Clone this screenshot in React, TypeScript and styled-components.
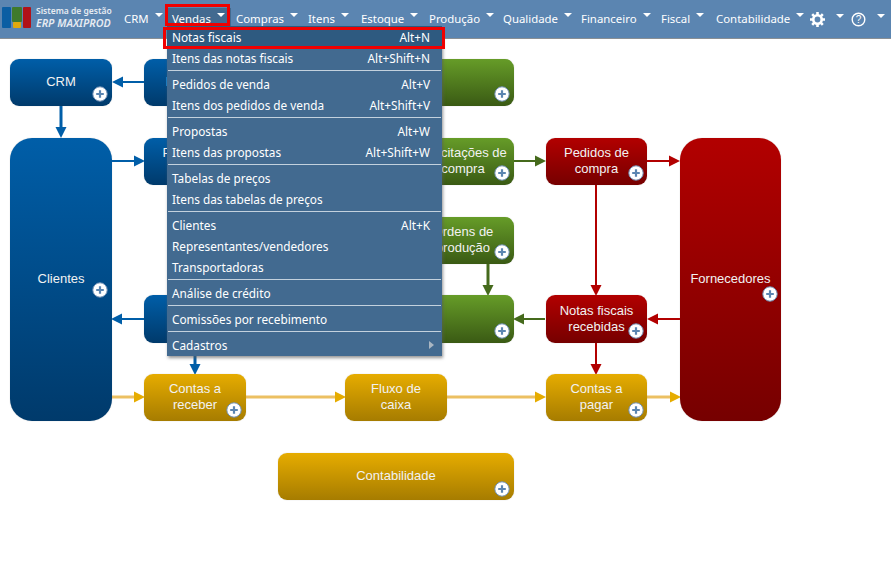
import React from 'react';
import styled, {createGlobalStyle, css} from 'styled-components';

const GlobalStyle = createGlobalStyle`
    html, body {
        margin: 0;
        padding: 0;
        background: #fff;
        overflow: hidden;
    }
`;

const menuFont = `'Noto Sans', 'DejaVu Sans', sans-serif`;

const Page = styled.div`
    position: relative;
    width: 891px;
    height: 566px;
    overflow: hidden;
`;

const NavBar = styled.nav`
    display: flex;
    align-items: center;
    height: 38px;
    background: #5b85b1;
    border-bottom: 1px solid #8a8f94;
    font-family: ${menuFont};
    font-size: 11.4px;
    color: #fff;
`;

const Brand = styled.div`
    display: flex;
    align-items: center;
    gap: 5px;
    width: 119px;
    margin-top: -4px;
    padding-left: 2px;
    box-sizing: border-box;
    flex: none;
`;

const BrandLogo = styled.svg`
    flex: none;
`;

const BrandText = styled.div`
    display: flex;
    flex-direction: column;
    color: #e6ebf1;
    white-space: nowrap;
`;

const BrandTop = styled.span`
    font-size: 8.5px;
    line-height: 12px;
    font-weight: 600;
`;

const BrandBottom = styled.span`
    font-size: 10.7px;
    line-height: 13px;
    font-weight: 600;
    font-style: italic;
`;

const NavItem = styled.div<{$active?: boolean; $width: number}>`
    display: flex;
    align-items: center;
    flex: none;
    gap: 6px;
    width: ${props => props.$width}px;
    height: 20px;
    margin-top: -2px;
    padding-left: 5px;
    box-sizing: border-box;
    white-space: nowrap;
    ${props => props.$active && css`background: #426a90;`}
`;

const Caret = styled.span`
    flex: none;
    width: 0;
    height: 0;
    margin-top: -6px;
    border-left: 4px solid transparent;
    border-right: 4px solid transparent;
    border-top: 4px solid #fff;
`;

const IconItem = styled.div<{$width: number}>`
    display: flex;
    align-items: center;
    flex: none;
    gap: 11px;
    width: ${props => props.$width}px;
    padding-left: 5px;
    box-sizing: border-box;
`;

const HelpMark = styled.text`
    font-family: 'Liberation Sans', Arial, sans-serif;
    font-size: 10px;
    fill: #fff;
    text-anchor: middle;
`;

const Highlight = styled.div<{$x: number; $y: number; $w: number; $h: number}>`
    position: absolute;
    left: ${props => props.$x}px;
    top: ${props => props.$y}px;
    width: ${props => props.$w}px;
    height: ${props => props.$h}px;
    box-sizing: border-box;
    border: 3px solid #f00000;
    z-index: 5;
`;

const Menu = styled.div`
    position: absolute;
    left: 167px;
    top: 26px;
    width: 275px;
    padding-bottom: 1px;
    background: #426a90;
    box-shadow: 1px 2px 3px rgba(90, 90, 90, 0.65);
    font-family: ${menuFont};
    font-size: 11.8px;
    color: #fff;
    z-index: 4;
`;

const MenuRow = styled.div<{$active?: boolean}>`
    display: flex;
    align-items: center;
    justify-content: space-between;
    height: 21px;
    padding: 0 12px 0 5px;
    box-sizing: border-box;
    white-space: nowrap;
    ${props => props.$active && css`background: #2e5a80;`}
`;

const Separator = styled.div`
    height: 1px;
    margin: 2px 1px;
    background: #c3d1de;
`;

const SubArrow = styled.span`
    width: 0;
    height: 0;
    margin-right: -4px;
    border-top: 4px solid transparent;
    border-bottom: 4px solid transparent;
    border-left: 5px solid #a9b6c2;
`;

const Canvas = styled.div`
    position: relative;
    height: 527px;
    font-family: 'Liberation Sans', Arial, sans-serif;
`;

const Wires = styled.svg`
    position: absolute;
    left: 0;
    top: -39px;
`;

const tones = {
    blue: '#005ea8, #003a6b',
    green: '#669c28, #3a5a14',
    red: '#b20000, #760000',
    gold: '#e6ac00, #a67c00',
};

type Tone = keyof typeof tones;

interface INodeProps {
    readonly $x: number;
    readonly $y: number;
    readonly $w?: number;
    readonly $h?: number;
    readonly $tall?: boolean;
    readonly $tone: Tone;
}

const Node = styled.div<INodeProps>`
    position: absolute;
    left: ${props => props.$x}px;
    top: ${props => props.$y - 39}px;
    width: ${props => props.$w || 102}px;
    height: ${props => props.$h || 47}px;
    box-sizing: border-box;
    display: flex;
    align-items: ${props => props.$tall ? 'flex-start' : 'center'};
    justify-content: center;
    padding: ${props => props.$tall ? '133px 0 0' : '0 0 1px'};
    border-radius: ${props => props.$tall ? '22px' : '9px'};
    background: linear-gradient(${props => tones[props.$tone]});
    box-shadow: 0 0 1px rgba(120, 120, 120, 0.5);
    color: #f2f2f2;
    font-size: 13px;
    line-height: 16px;
    text-align: center;
`;

const Plus = styled.svg<{$right?: number; $bottom?: number}>`
    position: absolute;
    right: ${props => props.$right ?? 4}px;
    bottom: ${props => props.$bottom ?? 4}px;
    width: 16px;
    height: 16px;
`;

const PlusIcon = ({right, bottom}: {right?: number; bottom?: number}) => (
    <Plus $right={right} $bottom={bottom} viewBox="0 0 16 16">
        <circle cx="8" cy="8" r="7.2" fill="#fff" stroke="#6f8fb4" strokeWidth="1" />
        <path d="M8 4.2v7.6M4.2 8h7.6" stroke="#5b85b1" strokeWidth="2.2" />
    </Plus>
);

const GearIcon = () => (
    <svg width="15" height="15" viewBox="0 0 15 15">
        <circle cx="7.5" cy="7.5" r="4.2" fill="none" stroke="#fff" strokeWidth="2.6" />
        <path
            d="M7.5 0v3M7.5 12v3M0 7.5h3M12 7.5h3M2.2 2.2l2.1 2.1M10.7 10.7l2.1 2.1M12.8 2.2l-2.1 2.1M4.3 10.7l-2.1 2.1"
            stroke="#fff"
            strokeWidth="2.6"
        />
    </svg>
);

const HelpIcon = () => (
    <svg width="15" height="15" viewBox="0 0 15 15">
        <circle cx="7.5" cy="7.5" r="6.3" fill="none" stroke="#fff" strokeWidth="1.4" />
        <HelpMark x="7.5" y="11">?</HelpMark>
    </svg>
);

const colors = {blue: '#005ea8', green: '#456a1c', red: '#b20000', gold: '#e6ac00', goldLine: '#ecc062'};

interface IArrowProps {
    readonly x1: number;
    readonly y1: number;
    readonly x2: number;
    readonly y2: number;
    readonly color: string;
    readonly line?: string;
    readonly thick?: boolean;
}

// x1,y1 -> x2,y2 with the head at the end; only straight runs in this diagram
const Arrow = ({x1, y1, x2, y2, color, line, thick}: IArrowProps) => {
    const dx = Math.sign(x2 - x1);
    const dy = Math.sign(y2 - y1);
    const head = 11;
    const half = 5.5;
    const bx = x2 - dx * head;
    const by = y2 - dy * head;
    const points = `${x2},${y2} ${bx + dy * half},${by + dx * half} ${bx - dy * half},${by - dx * half}`;
    return (
        <g>
            <line x1={x1} y1={y1} x2={bx} y2={by} stroke={line || color} strokeWidth={thick ? 3 : 2} />
            <polygon points={points} fill={color} />
        </g>
    );
};

const navItems = [
    {label: 'CRM', width: 48},
    {label: 'Vendas', width: 64, active: true},
    {label: 'Compras', width: 72},
    {label: 'Itens', width: 53},
    {label: 'Estoque', width: 68},
    {label: 'Produção', width: 74},
    {label: 'Qualidade', width: 78},
    {label: 'Financeiro', width: 80},
    {label: 'Fiscal', width: 55},
    {label: 'Contabilidade', width: 94},
];

const menuGroups: {label: string; shortcut?: string; active?: boolean; sub?: boolean}[][] = [
    [
        {label: 'Notas fiscais', shortcut: 'Alt+N', active: true},
        {label: 'Itens das notas fiscais', shortcut: 'Alt+Shift+N'},
    ],
    [
        {label: 'Pedidos de venda', shortcut: 'Alt+V'},
        {label: 'Itens dos pedidos de venda', shortcut: 'Alt+Shift+V'},
    ],
    [
        {label: 'Propostas', shortcut: 'Alt+W'},
        {label: 'Itens das propostas', shortcut: 'Alt+Shift+W'},
    ],
    [
        {label: 'Tabelas de preços'},
        {label: 'Itens das tabelas de preços'},
    ],
    [
        {label: 'Clientes', shortcut: 'Alt+K'},
        {label: 'Representantes/vendedores'},
        {label: 'Transportadoras'},
    ],
    [{label: 'Análise de crédito'}],
    [{label: 'Comissões por recebimento'}],
    [{label: 'Cadastros', sub: true}],
];

export default () => {
    return (
        <Page>
            <GlobalStyle />
            <NavBar>
                <Brand>
                    <BrandLogo width="29" height="21" viewBox="0 0 29 21">
                        <rect x="0" y="0" width="9" height="21" rx="1" fill="#0b5ea3" />
                        <rect x="10" y="0" width="10" height="15" rx="1" fill="#3f7a2c" />
                        <rect x="11" y="15" width="8" height="6" rx="1" fill="#e0a80c" />
                        <rect x="21" y="0" width="8" height="21" rx="1" fill="#b01218" />
                    </BrandLogo>
                    <BrandText>
                        <BrandTop>Sistema de gestão</BrandTop>
                        <BrandBottom>ERP MAXIPROD</BrandBottom>
                    </BrandText>
                </Brand>
                {navItems.map(item => (
                    <NavItem key={item.label} $width={item.width} $active={item.active}>
                        {item.label}
                        <Caret />
                    </NavItem>
                ))}
                <IconItem $width={41}>
                    <GearIcon />
                    <Caret />
                </IconItem>
                <IconItem $width={40}>
                    <HelpIcon />
                    <Caret />
                </IconItem>
            </NavBar>

            <Canvas>
                <Wires width="891" height="566">
                    <Arrow x1={144} y1={82} x2={112} y2={82} color={colors.blue} />
                    <Arrow x1={61} y1={106} x2={61} y2={138} color={colors.blue} thick />
                    <Arrow x1={112} y1={161} x2={145} y2={161} color={colors.blue} />
                    <Arrow x1={144} y1={319} x2={111} y2={319} color={colors.blue} />
                    <Arrow x1={195} y1={343} x2={195} y2={375} color={colors.blue} thick />
                    <Arrow x1={112} y1={397} x2={145} y2={397} color={colors.gold} line={colors.goldLine} thick />
                    <Arrow x1={246} y1={397} x2={346} y2={397} color={colors.gold} line={colors.goldLine} thick />
                    <Arrow x1={447} y1={397} x2={546} y2={397} color={colors.gold} line={colors.goldLine} thick />
                    <Arrow x1={647} y1={397} x2={681} y2={397} color={colors.gold} line={colors.goldLine} thick />
                    <Arrow x1={514} y1={161} x2={546} y2={161} color={colors.green} />
                    <Arrow x1={488} y1={264} x2={488} y2={296} color={colors.green} thick />
                    <Arrow x1={545} y1={319} x2={513} y2={319} color={colors.green} />
                    <Arrow x1={647} y1={161} x2={680} y2={161} color={colors.red} />
                    <Arrow x1={680} y1={319} x2={647} y2={319} color={colors.red} />
                    <Arrow x1={596} y1={185} x2={596} y2={296} color={colors.red} />
                    <Arrow x1={596} y1={343} x2={596} y2={375} color={colors.red} />
                </Wires>

                <Node $x={10} $y={59} $tone="blue">CRM<PlusIcon /></Node>
                <Node $x={144} $y={59} $tone="blue">Propostas</Node>
                <Node $x={278} $y={59} $w={236} $tone="green">Compras<PlusIcon /></Node>

                <Node $x={10} $y={138} $h={283} $tall $tone="blue">Clientes<PlusIcon bottom={123} /></Node>
                <Node $x={144} $y={138} $tone="blue">Pedidos de<br />venda</Node>
                <Node $x={412} $y={138} $tone="green">Solicitações de<br />compra<PlusIcon /></Node>
                <Node $x={546} $y={138} $w={101} $tone="red">Pedidos de<br />compra<PlusIcon right={3} /></Node>
                <Node $x={680} $y={138} $w={101} $h={283} $tall $tone="red">Fornecedores<PlusIcon right={3} bottom={119} /></Node>

                <Node $x={412} $y={217} $tone="green">Ordens de<br />produção<PlusIcon /></Node>

                <Node $x={144} $y={295} $h={48} $tone="blue">Notas<br />fiscais</Node>
                <Node $x={278} $y={295} $w={236} $h={48} $tone="green">Estoque<PlusIcon /></Node>
                <Node $x={546} $y={295} $w={101} $h={48} $tone="red">Notas fiscais<br />recebidas<PlusIcon right={3} /></Node>

                <Node $x={144} $y={374} $tone="gold">Contas a<br />receber<PlusIcon bottom={3} /></Node>
                <Node $x={345} $y={374} $tone="gold">Fluxo de<br />caixa</Node>
                <Node $x={546} $y={374} $w={101} $tone="gold">Contas a<br />pagar<PlusIcon right={3} bottom={3} /></Node>

                <Node $x={278} $y={453} $w={236} $tone="gold">Contabilidade<PlusIcon bottom={3} /></Node>
            </Canvas>

            <Menu>
                {menuGroups.map((group, index) => (
                    <React.Fragment key={index}>
                        {index > 0 && <Separator />}
                        {group.map(row => (
                            <MenuRow key={row.label} $active={row.active}>
                                <span>{row.label}</span>
                                {row.shortcut && <span>{row.shortcut}</span>}
                                {row.sub && <SubArrow />}
                            </MenuRow>
                        ))}
                    </React.Fragment>
                ))}
            </Menu>

            <Highlight $x={165} $y={4} $w={65} $h={22} />
            <Highlight $x={163} $y={27} $w={282} $h={22} />
        </Page>
    );
};
